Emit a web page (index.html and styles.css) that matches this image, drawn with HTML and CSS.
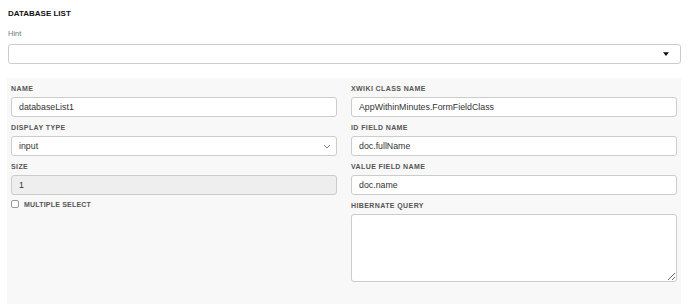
FILE: index.html
```html
<!DOCTYPE html>
<html lang="en">
<head>
  <meta charset="UTF-8">
  <title>Database List</title>
  <link rel="stylesheet" href="styles.css">
</head>
<body>
  <div class="field-editor">
    <h2 class="title">DATABASE LIST</h2>
    <div class="hint-label">Hint</div>
    <div class="hint-select">
      <svg class="caret" width="8" height="5" viewBox="0 0 8 5"><path d="M0 0h8L4 5z" fill="#111"/></svg>
    </div>

    <div class="panel">
      <div class="col">
        <label class="lbl">NAME</label>
        <input class="txt" type="text" value="databaseList1">
        <label class="lbl">DISPLAY TYPE</label>
        <div class="txt sel">
          <span>input</span>
          <svg width="8" height="5" viewBox="0 0 8 5"><path d="M1 1l3 3 3-3" fill="none" stroke="#888" stroke-width="1"/></svg>
        </div>
        <label class="lbl">SIZE</label>
        <input class="txt disabled" type="text" value="1" disabled>
        <label class="check"><span class="box"></span>MULTIPLE SELECT</label>
      </div>
      <div class="col">
        <label class="lbl">XWIKI CLASS NAME</label>
        <input class="txt" type="text" value="AppWithinMinutes.FormFieldClass">
        <label class="lbl">ID FIELD NAME</label>
        <input class="txt" type="text" value="doc.fullName">
        <label class="lbl">VALUE FIELD NAME</label>
        <input class="txt" type="text" value="doc.name">
        <label class="lbl">HIBERNATE QUERY</label>
        <textarea class="txt area"></textarea>
      </div>
    </div>
  </div>
</body>
</html>
```

FILE: styles.css
```css
* { margin: 0; padding: 0; box-sizing: border-box; }
body {
  font-family: 'Liberation Sans', Arial, sans-serif;
  background: #fff;
  color: #333;
}
.field-editor { padding: 8px 9px 0 8px; }
.title {
  font-size: 8px;
  font-weight: bold;
  color: #111;
  line-height: 11px;
}
.hint-label {
  margin-top: 10px;
  font-size: 7.5px;
  color: #777;
  line-height: 10px;
}
.hint-select {
  margin-top: 5px;
  height: 20px;
  border: 1px solid #ccc;
  border-radius: 3px;
  display: flex;
  align-items: center;
  justify-content: flex-end;
  padding-right: 11px;
}
.caret { width: 6px; height: 4px; }
.panel {
  margin: 14px 0 0 -1px;
  background: #f8f8f8;
  padding: 6px 4px 20px 4px;
  display: grid;
  grid-template-columns: 1fr 1fr;
  column-gap: 14px;
}
.col { display: flex; flex-direction: column; }
.lbl {
  font-size: 7px;
  font-weight: bold;
  color: #555;
  letter-spacing: 0.4px;
  line-height: 10px;
  margin-bottom: 3px;
}
.txt {
  height: 20px;
  border: 1px solid #ccc;
  border-radius: 3px;
  background: #fff;
  font-family: inherit;
  font-size: 8.8px;
  color: #333;
  padding: 0 7px;
  margin-bottom: 6px;
  outline: none;
}
.sel {
  display: flex;
  align-items: center;
  justify-content: space-between;
  padding-right: 5px;
}
.disabled { background: #eee; color: #333; }
.check {
  display: flex;
  align-items: center;
  font-size: 7px;
  font-weight: bold;
  color: #555;
  letter-spacing: 0.2px;
  margin-top: -1px;
}
.box {
  width: 8px;
  height: 8px;
  border: 1px solid #999;
  border-radius: 2px;
  background: #fff;
  margin-right: 5px;
}
.area { height: 68px; resize: vertical; }
```
